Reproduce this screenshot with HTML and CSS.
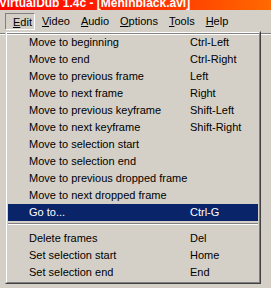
FILE: index.html
```html
<!DOCTYPE html>
<html>
<head>
<meta charset="utf-8">
<link rel="stylesheet" href="styles.css">
</head>
<body>
<div class="titlebar"><span class="title">VirtualDub 1.4c - [Meninblack.avi]</span></div>
<div class="menubar">
  <span class="mb-item pressed"><u>E</u>dit</span>
  <span class="mb-item"><u>V</u>ideo</span>
  <span class="mb-item"><u>A</u>udio</span>
  <span class="mb-item"><u>O</u>ptions</span>
  <span class="mb-item"><u>T</u>ools</span>
  <span class="mb-item"><u>H</u>elp</span>
</div>
<div class="toolbar-edge"></div>
<div class="popup">
  <div class="popup-inner">
    <div class="mi"><span>Move to beginning</span><span>Ctrl-Left</span></div>
    <div class="mi"><span>Move to end</span><span>Ctrl-Right</span></div>
    <div class="mi"><span>Move to previous frame</span><span>Left</span></div>
    <div class="mi"><span>Move to next frame</span><span>Right</span></div>
    <div class="mi"><span>Move to previous keyframe</span><span>Shift-Left</span></div>
    <div class="mi"><span>Move to next keyframe</span><span>Shift-Right</span></div>
    <div class="mi"><span>Move to selection start</span><span></span></div>
    <div class="mi"><span>Move to selection end</span><span></span></div>
    <div class="mi"><span>Move to previous dropped frame</span><span></span></div>
    <div class="mi"><span>Move to next dropped frame</span><span></span></div>
    <div class="mi active"><span>Go to...</span><span>Ctrl-G</span></div>
    <div class="sep"></div>
    <div class="mi"><span>Delete frames</span><span>Del</span></div>
    <div class="mi"><span>Set selection start</span><span>Home</span></div>
    <div class="mi"><span>Set selection end</span><span>End</span></div>
  </div>
</div>
</body>
</html>
```
FILE: styles.css
```css
html, body {
  margin: 0;
  padding: 0;
}
body {
  width: 271px;
  height: 288px;
  overflow: hidden;
  background: #d4d0c8;
  font-family: "Liberation Sans", Arial, sans-serif;
  font-size: 11px;
  color: #000;
  position: relative;
}
.titlebar {
  height: 10px;
  overflow: hidden;
  background: linear-gradient(to right, #ff0000 0%, #ff2a00 50%, #ff6a00 100%);
}
.title {
  display: block;
  margin-top: -2px;
  margin-left: -1px;
  line-height: 11px;
  font-weight: bold;
  font-size: 12px;
  color: #fff;
  white-space: nowrap;
}
.menubar {
  height: 18px;
  padding: 3px 0 0 5px;
  display: flex;
  align-items: flex-start;
}
.mb-item {
  display: block;
  height: 15px;
  line-height: 15px;
  padding: 0 3px 0 6px;
  border: 1px solid transparent;
  white-space: nowrap;
}
.mb-item u {
  text-decoration: underline;
  text-underline-offset: 1px;
}
.mb-item.pressed {
  border-color: #808080 #fff #fff #808080;
  padding: 1px 2px 0 7px;
  height: 14px;
}
.toolbar-edge {
  margin-top: 2px;
  height: 0;
  border-top: 1px solid #808080;
  border-bottom: 1px solid #fff;
}
.popup {
  position: absolute;
  left: 5px;
  top: 31px;
  width: 254px;
  border: 1px solid;
  border-color: #d4d0c8 #404040 #404040 #d4d0c8;
}
.popup-inner {
  border: 1px solid;
  border-color: #fff #808080 #808080 #fff;
  padding: 1px;
}
.mi {
  display: grid;
  grid-template-columns: 161px auto;
  height: 17px;
  line-height: 17px;
  padding-left: 21px;
  white-space: nowrap;
}
.mi.active {
  background: #0a246a;
  color: #fff;
}
.sep {
  height: 9px;
  position: relative;
}
.sep::before {
  content: "";
  position: absolute;
  left: 0;
  right: 0;
  top: 2px;
  border-top: 1px solid #808080;
  border-bottom: 1px solid #fff;
}
```
